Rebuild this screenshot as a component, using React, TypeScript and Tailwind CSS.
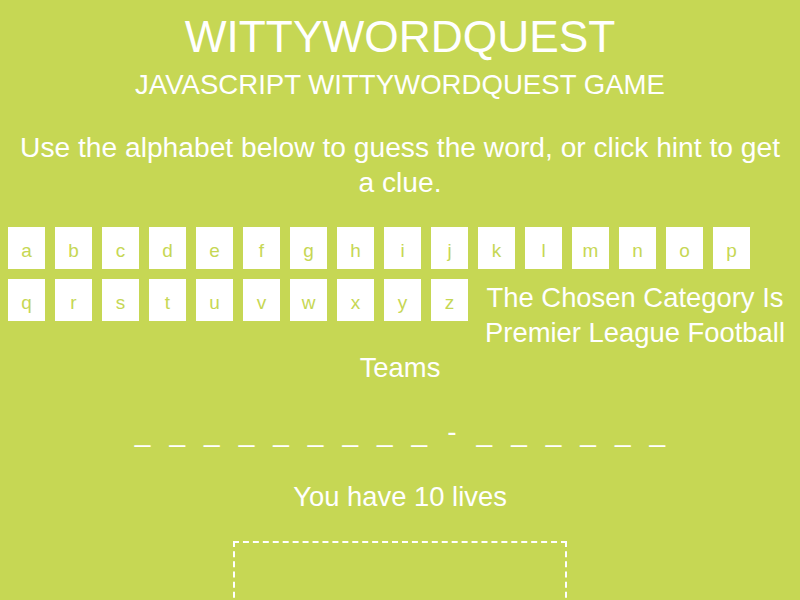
const letters = 'abcdefghijklmnopqrstuvwxyz'.split('');
const word = 'newcastle-united'.split('');

export default function App() {
  return (
    <div className="h-[600px] overflow-hidden bg-[#c6d754] px-2 text-center text-white font-['Liberation_Sans',Arial,sans-serif]">
      <h1 className="pt-[8.5px] text-[44.3px] leading-[56px] font-normal">WITTYWORDQUEST</h1>
      <h2 className="mt-[4.3px] text-[27.6px] leading-[32px] font-normal">JAVASCRIPT WITTYWORDQUEST GAME</h2>
      <p className="mx-auto mt-[29.2px] max-w-[780px] text-[28.2px] leading-[35px]">
        Use the alphabet below to guess the word, or click hint to get a clue.
      </p>
      <div className="pt-[26.7px]">
        <ul>
          {letters.map((l) => (
            <li
              key={l}
              className="float-left mr-[10px] mb-[10px] h-[42px] w-[37px] cursor-pointer border border-white bg-white pt-[10px] text-[19px] leading-[25px] text-[#c6d754]"
            >
              {l}
            </li>
          ))}
        </ul>
        <p className="mt-[53.8px] text-[27.4px] leading-[35px]">
          The Chosen Category Is Premier League Football Teams
        </p>
      </div>
      <ul className="clear-both mt-[30.3px] flex justify-center text-[28px] leading-[32px]">
        {word.map((c, i) => (
          <li key={i} className={c === '-' ? 'w-[30.4px]' : 'w-[34.6px]'}>
            {c === '-' ? '-' : '_'}
          </li>
        ))}
      </ul>
      <p className="mt-[32.8px] text-[27.4px] leading-[32px]">You have 10 lives</p>
      <div className="mx-auto mt-[28.4px] h-[250px] w-[334px] border-2 border-dashed border-white"></div>
    </div>
  );
}
